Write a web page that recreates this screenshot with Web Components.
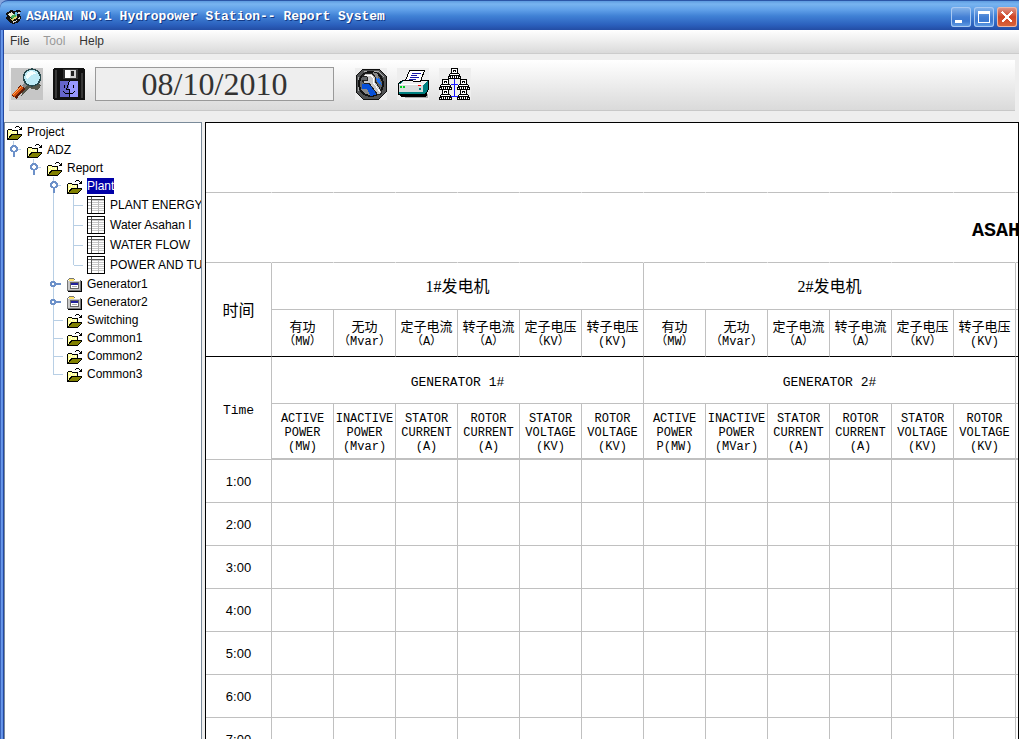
<!DOCTYPE html>
<html lang="en">
<head>
<meta charset="utf-8">
<title>ASAHAN NO.1 Hydropower Station-- Report System</title>
<style>
  html, body { height: 100%; margin: 0; }
  body { overflow: hidden; background: #eee; font: 12px/18px "Liberation Sans", Arial, sans-serif; color: #000; }
</style>
</head>
<body>
<report-window></report-window>

<script>
/* ---------- icons ---------- */
const computer = (x, y) => `<g transform="translate(${x} ${y})"><path fill="#000" d="M3 0h7v5h1v1h1v2h1v3H0V8h1V6h1V5h1z"/><path fill="#fff" d="M4 1h5v4H4zM2 6h9v1H2zM1 9h11v1H1z"/><path fill="#000" d="M5 2h3v2H5zM2 9h1v1H2zM4 9h1v1H4zM6 9h1v1H6zM8 9h1v1H8zM10 9h1v1h-1z"/><path fill="#fff" d="M6 3h1v1H6zM3 8h1v1H3zM5 8h1v1H5zM7 8h1v1H7zM9 8h1v1H9z"/></g>`;
const ICONS = {
  find: [32, 32, `<path fill="#c6c6c6" d="M0 0h32v32H0z"/><path d="M25 14c6 1 6 6 1 8l-8-2-8 9 3-12z" fill="#55564a"/><path d="M15 16l-3 3" stroke="#888" stroke-width="3"/><path d="M12 19L3 29" stroke="#5b1c08" stroke-width="6"/><path d="M11 19L2 28" stroke="#d8500c" stroke-width="4"/><path d="M10 19L2 27" stroke="#ffac58"/><circle cx="21" cy="9.500" r="8.500" fill="#bdeaf5" stroke="#27484c" stroke-width="1.500"/><path d="M15 8c2-6 8-6 11-2-4-1-7 2-10 6z" fill="#f4ffff"/>`],
  save: [32, 32, `<path fill="#111" d="M1 0h29l2 2v30H1l-1-1V1z"/><path fill="#383838" d="M2 2h2v28H2zM28 5h2v25h-2z"/><path fill="#333" d="M10 1h15v10H10z"/><path fill="#d0d0d0" d="M12 2h11v8H12z"/><path fill="#fff" d="M12 2h5v8h-5z"/><path fill="#222" d="M18 3h3v5h-3z"/><path fill="#6666cc" d="M7 13h11v16H7z"/><path fill="#9999ff" d="M16 13h9v16h-9z"/><path fill="none" stroke="#000" d="M11.500 17v3M20.500 17v3M16.500 13l-3 8h3v8M10 23l2 2 4 1 4-1 2-2"/>`],
  tools: [32, 32, `<path fill="#eee" d="M0 0h32v32H0z"/><path fill="#505253" stroke="#111" d="M8 1h16l7 7v16l-7 7H8l-7-7V8z"/><path fill="none" stroke="#aaa" d="M9 3h14l6 6M3 9v14"/><circle cx="16" cy="16" r="12" fill="#626568" stroke="#111" stroke-width="2"/><path fill="#0750d8" d="M7 16l6-2 10 12-7 2-9-5z"/><path fill="#1671ff" d="M19 8l5 2 3 7-4-2z"/><path fill="#888" d="M18 4l5 2v5l-4-2zM6 21h6l3 6-5-1z"/><path fill="#c8c8c8" stroke="#222" d="M7 8l5-3h5l3 4v4l7 11-2 3-3-1-8-11H9l-2-3h5V9z"/><path stroke="#fff" fill="none" d="M10 7h6l2 3v4l7 10"/>`],
  print: [32, 32, `<path fill="#eee" d="M0 0h32v32H0z"/><path fill="#aaa" d="M4 26h27v4H8z"/><path fill="#000" d="M3 26h27v2l-2 1H5l-2-1z"/><path fill="#008080" stroke="#000" d="M1.500 15.500l4-3h26v9l-3 5h-27z"/><path fill="#eee" d="M2 17h24l4-4H7z"/><path fill="#d9dddd" d="M2 17h24v7H2z"/><path fill="#fff" d="M2 16h24v1H2z"/><path fill="#008080" d="M2 24h24v1H2z"/><path fill="#00d020" d="M3 18h2v2H3zM6 18h2v2H6z"/><path fill="#f00" d="M21 17h3v1h-3z"/><path fill="#008080" d="M22 20h2v2h-2z"/><path fill="#fff" stroke="#000" d="M8.500 12.500l4-10h15l-4 11z"/><path fill="none" stroke="#1717a8" d="M15 5.500h9M14 7.500h6M13 9.500h9M12 11.500h7"/>`],
  network: [32, 32, `<path fill="#eee" d="M0 0h32v32H0z"/><path fill="#1616ff" d="M15 11h1v18h-1zM12 16h7v1h-7zM12 28h7v1h-7z"/>${computer(9, 0)}${computer(0, 11)}${computer(18, 11)}${computer(0, 21)}${computer(18, 21)}`],
  folder: [16, 14, `<path fill="#000" d="M0 4h1V3h4v1h6v4h4v1l-4 5H0z"/><path fill="#ffff99" d="M1 4h4v1h5v3H4l-3 5z"/><path fill="#fff" d="M2 5h1v1H2zM4 6h1v1H4zM6 5h1v1H6zM8 6h1v1H8zM2 8h1v1H2z"/><path fill="#808000" d="M5 9h9l-3 4H2z"/><path fill="#000" d="M8 1h1v1H8zM9 0h3v1H9zM12 1h1v1h-1zM13 2h1v1h-1zM14 1h1v3h-3V3h2z"/>`],
  device: [16, 14, `<path fill="#777" d="M0 2h1V1h1V0h5v1h1v1h6v11H0z"/><path fill="#fff" d="M1 2h12v1H1z"/><path fill="#ffe36a" d="M2 1h5v2H2z"/><path fill="#c9c9c9" d="M1 3h12v9H1z"/><path fill="#000" d="M14 3h1v11H1v-1h13z"/><path fill="#666" d="M3 4h9v7H3z"/><path fill="#fff" d="M4 5h7v5H4z"/><path fill="#22229c" d="M4 5h7v2H4z"/><path fill="#aaa" d="M5 8h5v1H5z"/>`],
  sheet: [18, 18, `<path fill="#000" d="M0 0h18v18H0z"/><path fill="#fff" d="M1 1h16v16H1z"/><path fill="#c8c8c8" d="M5 4h12v1H5zM5 6h12v1H5zM5 8h12v1H5zM5 10h12v1H5zM5 12h12v1H5zM5 14h12v1H5z"/><path fill="#555" d="M1 3h16v1H1zM4 1h1v16H4z"/><path fill="#bbb" d="M11 4h1v13h-1zM1 6h3v1H1zM1 9h3v1H1zM1 12h3v1H1z"/>`],
  open: [12, 18, `<path fill="#6d91c9" d="M3 4h4v1h1v1h1v4H8v1H6v5H4v-5H2v-1H1V6h1V5h1z"/><path fill="#fff" d="M4 6h2v1h1v2H6v1H4V9H3V7h1z"/><path fill="#b8cfe5" d="M9 8h3v1H9z"/>`],
  closed: [12, 18, `<path fill="#6d91c9" d="M2 6h4v1h1v1h5v2H7v1H6v1H2v-1H1V7h1z"/><path fill="#fff" d="M3 8h2v2H3z"/>`],
  app: [16, 16, `<path fill="#111" d="M0 4l2-1 3-2 3 1 4-1 3 1-1 3 1 4-2 4-5 2-4-1-4-4 1-3z"/><path fill="#e8e8d0" d="M2 5l4-2 2 3-4 2z"/><path fill="#49b05a" d="M5 7l4-2 2 3-5 2z"/><path fill="#ddd36b" d="M3 9l3 1 5-3v2l-5 3z"/><path fill="#67bce8" d="M9 3l3 1-2 4z"/><path fill="#d8d8d8" d="M12 3h2v2h-2zM6 13l5-2v1l-4 2zM12 9l2-1v2h-2z"/>`],
  min: [20, 20, `<path fill="#fff" d="M4 13h7v3H4z"/>`],
  max: [20, 20, `<path fill="#fff" d="M4 4h12v12H4zM5 7v8h10V7z" fill-rule="evenodd"/>`],
  close: [20, 20, `<path stroke="#fff" stroke-width="2.500" d="M5 5l10 10M15 5L5 15"/>`]
};

class PixelIcon extends HTMLElement {
  connectedCallback() {
    const [w, h, art] = ICONS[this.getAttribute('name')];
    this.attachShadow({ mode: 'open' }).innerHTML = `
      <style>:host { display: block; flex: none; } svg { display: block; }</style>
      <svg width="${w}" height="${h}" viewBox="0 0 ${w} ${h}" shape-rendering="crispEdges" fill="none" aria-hidden="true">${art}</svg>`;
  }
}
customElements.define('pixel-icon', PixelIcon);

/* ---------- title bar ---------- */
class TitleBar extends HTMLElement {
  connectedCallback() {
    this.attachShadow({ mode: 'open' }).innerHTML = `
      <style>
        :host { display: flex; align-items: center; box-sizing: border-box; height: 30px; padding: 3px 2px 0 6px; gap: 4px;
          border-top: 1px solid #2c57a8; border-radius: 8px 0 0 0;
          background: linear-gradient(#5e9ce0 0, #78b4f0 3px, #5f9fe8 9px, #4081d5 15px, #2b60bd 24px, #234da4 29px); }
        h1 { flex: 1; margin: 0; font: bold 13px/20px "Liberation Mono", monospace; color: #fff; text-shadow: 1px 1px #123a86; white-space: pre; }
        .controls { display: flex; gap: 3px; }
        button { display: block; padding: 0; width: 20px; height: 20px; border: 0; border-radius: 3px; background: linear-gradient(#8ab8ec, #4580d4 50%, #3c78d0 70%, #64a0e6); box-shadow: inset 0 0 0 1px #a9c9f2; }
        .close { background: linear-gradient(#dc9a90, #cf4526 50%, #d9663c); box-shadow: inset 0 0 0 1px #f0b8a4; }
      </style>
      <pixel-icon name="app"></pixel-icon>
      <h1><slot></slot></h1>
      <div class="controls">
        <button aria-label="Minimize"><pixel-icon name="min"></pixel-icon></button>
        <button aria-label="Maximize"><pixel-icon name="max"></pixel-icon></button>
        <button class="close" aria-label="Close"><pixel-icon name="close"></pixel-icon></button>
      </div>`;
  }
}
customElements.define('title-bar', TitleBar);

/* ---------- menu bar ---------- */
class MenuBar extends HTMLElement {
  connectedCallback() {
    this.attachShadow({ mode: 'open' }).innerHTML = `
      <style>
        :host { display: block; border-bottom: 1px solid #ccc; background: linear-gradient(#fff, #dadada); }
        nav { display: flex; gap: 14px; padding: 2px 6px 3px; }
        button { padding: 0; border: 0; background: none; font: inherit; color: #333; }
        button:disabled { color: #999; }
      </style>
      <nav><button>File</button><button disabled>Tool</button><button>Help</button></nav>`;
  }
}
customElements.define('menu-bar', MenuBar);

/* ---------- toolbar ---------- */
class ToolBar extends HTMLElement {
  connectedCallback() {
    this.attachShadow({ mode: 'open' }).innerHTML = `
      <style>
        :host { display: flex; align-items: center; gap: 10px; box-sizing: border-box; height: 51px; margin: 6px 4px 11px 5px; padding: 0 2px 2px;
          border-bottom: 1px solid #c8c8c8; background: linear-gradient(#fff, #dadada); }
        button { padding: 0; border: 0; background: none; }
        input { box-sizing: border-box; width: 239px; height: 34px; margin-right: 11px; padding: 0; border: 1px solid #999; border-radius: 0; background: #eee;
          font: 32px/32px "Liberation Serif", serif; color: #333; text-align: center; }
      </style>
      <button aria-label="Find"><pixel-icon name="find"></pixel-icon></button>
      <button aria-label="Save"><pixel-icon name="save"></pixel-icon></button>
      <input aria-label="Report date" value="08/10/2010" readonly>
      <button aria-label="Settings"><pixel-icon name="tools"></pixel-icon></button>
      <button aria-label="Print"><pixel-icon name="print"></pixel-icon></button>
      <button aria-label="Network"><pixel-icon name="network"></pixel-icon></button>`;
  }
}
customElements.define('tool-bar', ToolBar);

/* ---------- project tree ---------- */
class TreeNode extends HTMLElement {
  connectedCallback() {
    const a = n => this.getAttribute(n);
    const handle = a('state') ? `<pixel-icon name="${a('state')}"></pixel-icon>` : '';
    this.attachShadow({ mode: 'open' }).innerHTML = `
      <style>
        :host { display: block; background: linear-gradient(#b8cfe5, #b8cfe5) 6px 0 / 1px 100% no-repeat; }
        :host(:last-child) { background-size: 1px 10px; }
        :host([root]) { background: none; }
        .row { display: flex; align-items: center; height: 18px; }
        :host([icon="sheet"]) .row { height: 20px; }
        .handle { flex: none; box-sizing: border-box; width: 20px; height: 18px; padding-left: 2px; }
        .handle:empty { background: linear-gradient(#b8cfe5, #b8cfe5) 7px 9px / 9px 1px no-repeat; }
        :host([root]) .handle { display: none; }
        .icon { flex: none; width: 19px; }
        .icon.small { padding-top: 2px; }
        button { flex: none; margin: 0; padding: 0 0 0 1px; border: 0; background: none; font: 12px/16px "Liberation Sans", Arial, sans-serif; color: #000; white-space: nowrap; }
        :host([icon="sheet"]) button { padding-left: 4px; }
        :host([selected]) button { margin-left: 1px; padding: 0; background: #0000a8; color: #fff; }
        .children { padding-left: 20px; }
        :host([root]) .children { padding-left: 0; }
      </style>
      <div class="row"><span class="handle">${handle}</span><span class="icon ${a('icon') === 'sheet' ? '' : 'small'}"><pixel-icon name="${a('icon')}"></pixel-icon></span><button>${a('label')}</button></div>
      <div class="children"><slot></slot></div>`;
  }
}
customElements.define('tree-node', TreeNode);

class ProjectTree extends HTMLElement {
  connectedCallback() {
    this.attachShadow({ mode: 'open' }).innerHTML = `
      <style>:host { display: block; box-sizing: border-box; padding-left: 2px; overflow: hidden; background: #fff; border: solid #7a8a99; border-width: 1px 1px 0; }</style>
      <slot></slot>`;
  }
}
customElements.define('project-tree', ProjectTree);

/* ---------- report table ---------- */
const repeat = (n, f) => Array.from({ length: n }, (_, i) => f(i)).join('');
const cells = list => list.map(c => `<th>${c}</th>`).join('');
const zh = () => [['有功', '（MW）'], ['无功', '（Mvar）'], ['定子电流', '（A）'], ['转子电流', '（A）'], ['定子电压', '（KV）'], ['转子电压', '(KV)']].map(([n, u]) => `<span>${n}</span><br>${u}`);
const en = (mw, mvar) => [`ACTIVE<br>POWER<br>${mw}`, `INACTIVE<br>POWER<br>${mvar}`, 'STATOR<br>CURRENT<br>(A)', 'ROTOR<br>CURRENT<br>(A)', 'STATOR<br>VOLTAGE<br>(KV)', 'ROTOR<br>VOLTAGE<br>(KV)'];

class ReportSheet extends HTMLElement {
  connectedCallback() {
    this.attachShadow({ mode: 'open' }).innerHTML = `
      <style>
        :host { display: block; overflow: hidden; background: #fff; border: solid #000; border-width: 1px 1px 0; }
        table { table-layout: fixed; width: 872px; border-collapse: separate; border-spacing: 0; }
        .first { width: 66px; }
        .unit { width: 62px; }
        th, td { box-sizing: border-box; padding: 0; border: solid #c0c0c0; border-width: 0 1px 1px 0; text-align: center; vertical-align: middle; font: 13px/16px "Liberation Mono", "Noto Sans CJK SC", monospace; white-space: nowrap; }
        .head { height: 70px; }
        .head td, .head th { border-right-color: #fff; }
        .head th { padding: 6px 0 0 18px; text-align: left; font: bold 20px/24px "Liberation Mono", monospace; }
        .group { height: 47px; }
        .group th { padding-top: 6px; }
        .group .cjk { padding-top: 2px; font: 16px/20px "Liberation Serif", "Noto Sans CJK SC", serif; }
        .units th { font-size: 12px; line-height: 14px; padding-top: 4px; }
        .units span { font-size: 13px; }
        .names { height: 47px; }
        .labels { height: 56px; }
        .labels th { border-bottom-width: 2px; }
        .names th, .group .black { border-bottom-color: #000; }
        .hour { height: 43px; }
        .hour th { padding-top: 2px; font: 13px/16px "Liberation Sans", Arial, sans-serif; }
      </style>
      <table>
        <colgroup><col class="first">${repeat(13, () => '<col class="unit">')}</colgroup>
        <tbody>
          <tr class="head">${repeat(14, () => '<td></td>')}</tr>
          <tr class="head">${repeat(12, () => '<td></td>')}<th>ASAHAN</th><td></td></tr>
          <tr class="group"><th rowspan="2" class="cjk black">时间</th><th colspan="6" class="cjk">1#发电机</th><th colspan="6" class="cjk">2#发电机</th><th></th></tr>
          <tr class="units names">${cells(zh())}${cells(zh())}<th></th></tr>
          <tr class="group"><th rowspan="2">Time</th><th colspan="6">GENERATOR 1#</th><th colspan="6">GENERATOR 2#</th><th></th></tr>
          <tr class="units labels">${cells(en('(MW)', '(Mvar)'))}${cells(en('P(MW)', '(MVar)'))}<th></th></tr>
          ${repeat(7, i => `<tr class="hour"><th>${i + 1}:00</th>${repeat(13, () => '<td></td>')}</tr>`)}
        </tbody>
      </table>`;
  }
}
customElements.define('report-sheet', ReportSheet);

/* ---------- application window ---------- */
class ReportWindow extends HTMLElement {
  connectedCallback() {
    this.attachShadow({ mode: 'open' }).innerHTML = `
      <style>
        :host { display: flex; flex-direction: column; height: 100vh; background: #86a5dc; }
        .frame { flex: 1; min-height: 0; display: flex; flex-direction: column; padding-left: 4px;
          background: linear-gradient(to right, #3a62b8 1px, #6c9cec 1px, #5a8ae4 3px, #2348a0 3px, #2348a0 4px, #eee 4px); }
        .split { flex: 1; min-height: 0; display: grid; grid-template-columns: 198px minmax(0, 1fr); gap: 3px; }
      </style>
      <title-bar>ASAHAN NO.1 Hydropower Station-- Report System</title-bar>
      <div class="frame">
        <menu-bar></menu-bar>
        <tool-bar></tool-bar>
        <div class="split">
          <project-tree>
            <tree-node root icon="folder" label="Project">
              <tree-node state="open" icon="folder" label="ADZ">
                <tree-node state="open" icon="folder" label="Report">
                  <tree-node state="open" icon="folder" label="Plant" selected>
                    <tree-node icon="sheet" label="PLANT ENERGY"></tree-node>
                    <tree-node icon="sheet" label="Water Asahan I"></tree-node>
                    <tree-node icon="sheet" label="WATER FLOW"></tree-node>
                    <tree-node icon="sheet" label="POWER AND TU"></tree-node>
                  </tree-node>
                  <tree-node state="closed" icon="device" label="Generator1"></tree-node>
                  <tree-node state="closed" icon="device" label="Generator2"></tree-node>
                  <tree-node icon="folder" label="Switching"></tree-node>
                  <tree-node icon="folder" label="Common1"></tree-node>
                  <tree-node icon="folder" label="Common2"></tree-node>
                  <tree-node icon="folder" label="Common3"></tree-node>
                </tree-node>
              </tree-node>
            </tree-node>
          </project-tree>
          <report-sheet></report-sheet>
        </div>
      </div>`;
  }
}
customElements.define('report-window', ReportWindow);
</script>
</body>
</html>
